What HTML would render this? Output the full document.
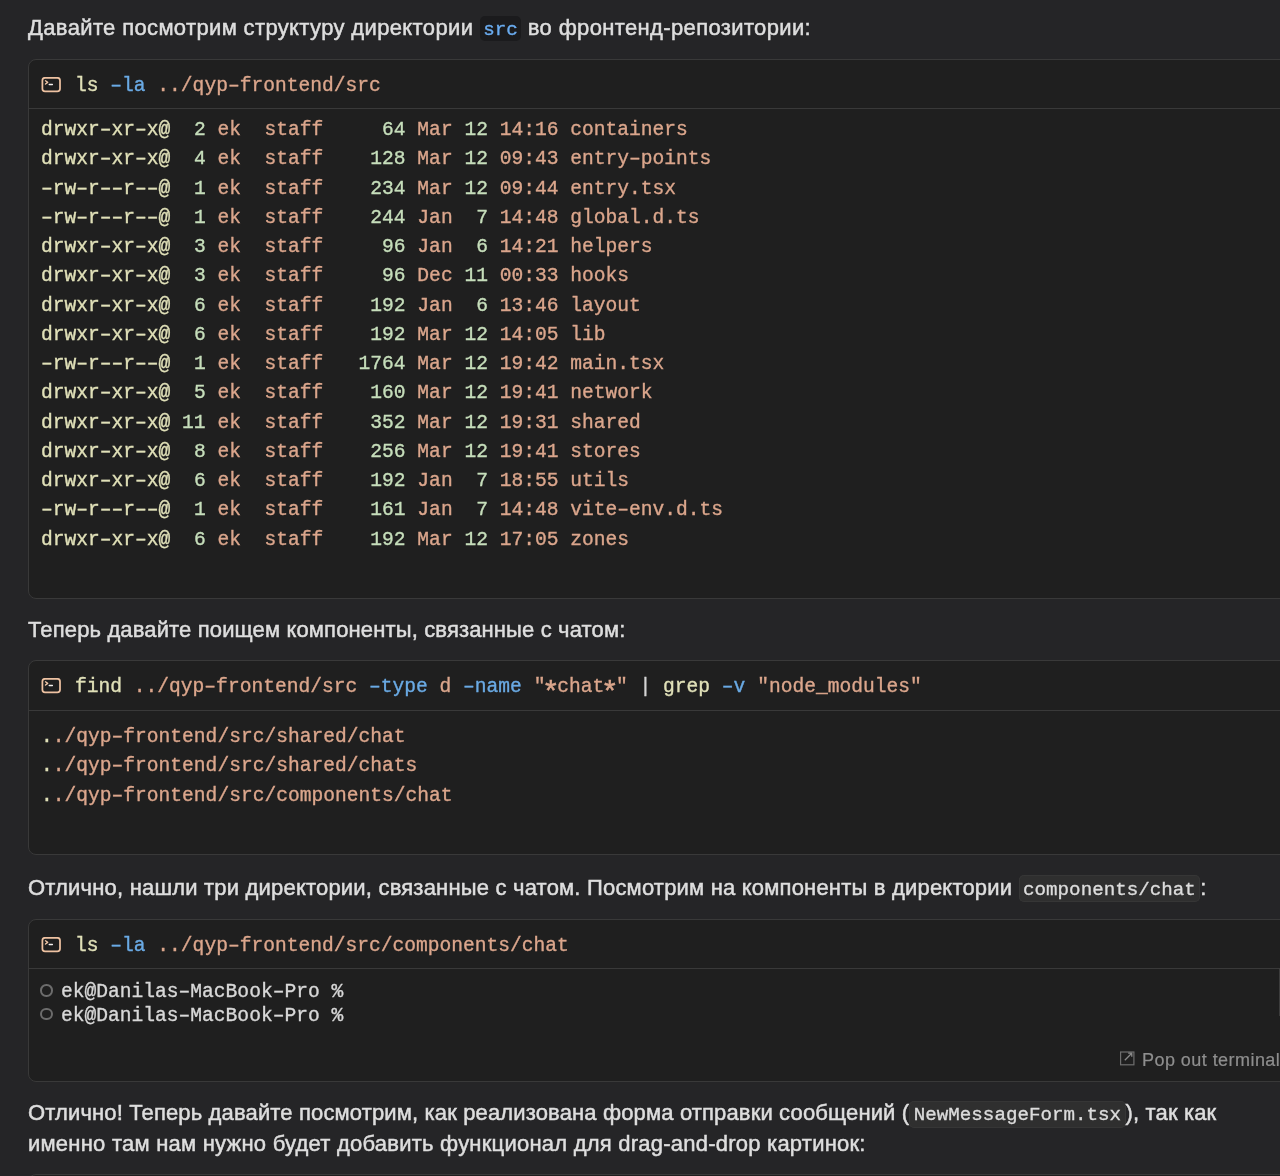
<!DOCTYPE html>
<html><head><meta charset="utf-8">
<style>
html,body{margin:0;padding:0;}
body{width:1280px;height:1176px;background:#252527;position:relative;overflow:hidden;font-family:"Liberation Sans",sans-serif;color:#dedede;}
.p{position:absolute;left:28px;font-size:22px;white-space:nowrap;line-height:30px;letter-spacing:0.2px;-webkit-text-stroke:0.5px #dedede;}
.ic{display:inline-block;font-family:"Liberation Mono",monospace;font-size:19.2px;letter-spacing:0;border-radius:5px;padding:2px 4.5px 0 4.5px;height:26px;line-height:26px;box-sizing:border-box;vertical-align:top;margin-top:1px;-webkit-text-stroke:0.35px currentColor;}
.blk{position:absolute;left:28px;width:1290px;background:#1f1f1f;border:1px solid #393939;border-radius:8px;box-sizing:border-box;}
.hd{position:absolute;left:0;top:0;right:0;height:50px;border-bottom:1px solid #393939;box-sizing:border-box;}
.mono{font-family:"Liberation Mono",monospace;font-size:19.6px;white-space:pre;position:absolute;-webkit-text-stroke:0.35px currentColor;}
.cmd{left:46px;top:13px;line-height:26px;}
.out{left:12px;line-height:29.26px;}
.ti{position:absolute;left:12px;top:17px;width:20px;height:16px;}
.y{color:#e0e0b8}.b{color:#6aaae4}.o{color:#dba68c}.g{color:#c6debb}.w{color:#d4d4d4}
.ast{display:inline-block;transform:translateY(7px) scale(1.5);}
.term{left:32px;line-height:23.6px;color:#d8d8d8;}
.circ{position:absolute;left:11px;width:12.5px;height:12.5px;border:2px solid #6c6c6c;border-radius:50%;box-sizing:border-box;}
.pop{position:absolute;left:1113px;top:1050px;font-size:18px;letter-spacing:0.45px;color:#8e8e8e;white-space:nowrap;-webkit-text-stroke:0.2px #8e8e8e;}
</style></head><body><div id="wrap" style="position:absolute;left:0;top:0;width:1280px;height:1176px;will-change:transform;overflow:hidden">
<div class="p" style="top:13px;letter-spacing:0.36px">Давайте посмотрим структуру директории <span class="ic" style="color:#6aacf0;background:#1b1b1d;margin-top:2.5px;height:25px;padding-top:1px;padding-left:3.5px;padding-right:3.5px">src</span> во фронтенд-репозитории:</div>

<div class="blk" style="top:59px;height:540px">
 <div class="hd" style="height:49px"><svg class="ti" viewBox="0 0 20 16"><rect x="1.4" y="0.85" width="17.6" height="13.6" rx="2.6" fill="none" stroke="#eec2a2" stroke-width="1.75"/><path d="M4.5 3.8 L6.7 5.4 L4.5 7.0" fill="none" stroke="#f2c8a8" stroke-width="1.35" stroke-linecap="round" stroke-linejoin="round"/><path d="M8.2 7.5 H11.4" stroke="#f4f0ee" stroke-width="1.3" stroke-linecap="round"/></svg>
  <div class="mono cmd"><span class="y">ls</span> <span class="b">–la</span> <span class="o">../qyp–frontend/src</span></div>
 </div>
 <div class="mono out" style="top:56px"><span class="y">drwxr–xr–x@</span>  <span class="g">2</span> <span class="o">ek</span>  <span class="o">staff</span>     <span class="g">64</span> <span class="o">Mar</span> <span class="g">12</span> <span class="o">14:16</span> <span class="o">containers</span>
<span class="y">drwxr–xr–x@</span>  <span class="g">4</span> <span class="o">ek</span>  <span class="o">staff</span>    <span class="g">128</span> <span class="o">Mar</span> <span class="g">12</span> <span class="o">09:43</span> <span class="o">entry–points</span>
<span class="y">–rw–r––r––@</span>  <span class="g">1</span> <span class="o">ek</span>  <span class="o">staff</span>    <span class="g">234</span> <span class="o">Mar</span> <span class="g">12</span> <span class="o">09:44</span> <span class="o">entry.tsx</span>
<span class="y">–rw–r––r––@</span>  <span class="g">1</span> <span class="o">ek</span>  <span class="o">staff</span>    <span class="g">244</span> <span class="o">Jan</span>  <span class="g">7</span> <span class="o">14:48</span> <span class="o">global.d.ts</span>
<span class="y">drwxr–xr–x@</span>  <span class="g">3</span> <span class="o">ek</span>  <span class="o">staff</span>     <span class="g">96</span> <span class="o">Jan</span>  <span class="g">6</span> <span class="o">14:21</span> <span class="o">helpers</span>
<span class="y">drwxr–xr–x@</span>  <span class="g">3</span> <span class="o">ek</span>  <span class="o">staff</span>     <span class="g">96</span> <span class="o">Dec</span> <span class="g">11</span> <span class="o">00:33</span> <span class="o">hooks</span>
<span class="y">drwxr–xr–x@</span>  <span class="g">6</span> <span class="o">ek</span>  <span class="o">staff</span>    <span class="g">192</span> <span class="o">Jan</span>  <span class="g">6</span> <span class="o">13:46</span> <span class="o">layout</span>
<span class="y">drwxr–xr–x@</span>  <span class="g">6</span> <span class="o">ek</span>  <span class="o">staff</span>    <span class="g">192</span> <span class="o">Mar</span> <span class="g">12</span> <span class="o">14:05</span> <span class="o">lib</span>
<span class="y">–rw–r––r––@</span>  <span class="g">1</span> <span class="o">ek</span>  <span class="o">staff</span>   <span class="g">1764</span> <span class="o">Mar</span> <span class="g">12</span> <span class="o">19:42</span> <span class="o">main.tsx</span>
<span class="y">drwxr–xr–x@</span>  <span class="g">5</span> <span class="o">ek</span>  <span class="o">staff</span>    <span class="g">160</span> <span class="o">Mar</span> <span class="g">12</span> <span class="o">19:41</span> <span class="o">network</span>
<span class="y">drwxr–xr–x@</span> <span class="g">11</span> <span class="o">ek</span>  <span class="o">staff</span>    <span class="g">352</span> <span class="o">Mar</span> <span class="g">12</span> <span class="o">19:31</span> <span class="o">shared</span>
<span class="y">drwxr–xr–x@</span>  <span class="g">8</span> <span class="o">ek</span>  <span class="o">staff</span>    <span class="g">256</span> <span class="o">Mar</span> <span class="g">12</span> <span class="o">19:41</span> <span class="o">stores</span>
<span class="y">drwxr–xr–x@</span>  <span class="g">6</span> <span class="o">ek</span>  <span class="o">staff</span>    <span class="g">192</span> <span class="o">Jan</span>  <span class="g">7</span> <span class="o">18:55</span> <span class="o">utils</span>
<span class="y">–rw–r––r––@</span>  <span class="g">1</span> <span class="o">ek</span>  <span class="o">staff</span>    <span class="g">161</span> <span class="o">Jan</span>  <span class="g">7</span> <span class="o">14:48</span> <span class="o">vite–env.d.ts</span>
<span class="y">drwxr–xr–x@</span>  <span class="g">6</span> <span class="o">ek</span>  <span class="o">staff</span>    <span class="g">192</span> <span class="o">Mar</span> <span class="g">12</span> <span class="o">17:05</span> <span class="o">zones</span></div>
</div>

<div class="p" style="top:615px;letter-spacing:0.14px">Теперь давайте поищем компоненты, связанные с чатом:</div>

<div class="blk" style="top:660px;height:195px">
 <div class="hd"><svg class="ti" viewBox="0 0 20 16"><rect x="1.4" y="0.85" width="17.6" height="13.6" rx="2.6" fill="none" stroke="#eec2a2" stroke-width="1.75"/><path d="M4.5 3.8 L6.7 5.4 L4.5 7.0" fill="none" stroke="#f2c8a8" stroke-width="1.35" stroke-linecap="round" stroke-linejoin="round"/><path d="M8.2 7.5 H11.4" stroke="#f4f0ee" stroke-width="1.3" stroke-linecap="round"/></svg>
  <div class="mono cmd"><span class="y">find</span> <span class="o">../qyp–frontend/src</span> <span class="b">–type</span> <span class="o">d</span> <span class="b">–name</span> <span class="o">"<span class="ast">*</span>chat<span class="ast">*</span>"</span> <span class="w">|</span> <span class="y">grep</span> <span class="b">–v</span> <span class="o">"node_modules"</span></div>
 </div>
 <div class="mono out" style="top:62px"><span class="y">.</span><span class="o">./qyp–frontend/src/shared/chat</span>
<span class="y">.</span><span class="o">./qyp–frontend/src/shared/chats</span>
<span class="y">.</span><span class="o">./qyp–frontend/src/components/chat</span></div>
</div>

<div class="p" style="top:873px;letter-spacing:0.193px">Отлично, нашли три директории, связанные с чатом. Посмотрим на компоненты в директории <span class="ic" style="color:#dcdcdc;background:#2f2f2f;box-shadow:inset 0 0 0 1px #363636;margin-top:1.5px;height:27px;padding-top:2.5px">components/chat</span>:</div>

<div class="blk" style="top:919px;height:163px">
 <div class="hd" style="height:49px"><svg class="ti" viewBox="0 0 20 16"><rect x="1.4" y="0.85" width="17.6" height="13.6" rx="2.6" fill="none" stroke="#eec2a2" stroke-width="1.75"/><path d="M4.5 3.8 L6.7 5.4 L4.5 7.0" fill="none" stroke="#f2c8a8" stroke-width="1.35" stroke-linecap="round" stroke-linejoin="round"/><path d="M8.2 7.5 H11.4" stroke="#f4f0ee" stroke-width="1.3" stroke-linecap="round"/></svg>
  <div class="mono cmd"><span class="y">ls</span> <span class="b">–la</span> <span class="o">../qyp–frontend/src/components/chat</span></div>
 </div>
 <div class="circ" style="top:64px"></div>
 <div class="circ" style="top:87.6px"></div>
 <div class="mono term" style="top:61px">ek@Danilas–MacBook–Pro %
ek@Danilas–MacBook–Pro %</div>
</div>
<div style="position:absolute;left:1279px;top:968px;width:1px;height:48px;background:#3c3c3c"></div>
<div class="pop"><svg width="16" height="16" viewBox="0 0 16 16" style="position:absolute;left:6px;top:1px"><rect x="1.6" y="1" width="13.3" height="12.8" fill="none" stroke="#6e6e6e" stroke-width="1.2"/><path d="M5.8 9.2 L13 2 M9.2 2.2 H12.8 V5.8" fill="none" stroke="#8a8a8a" stroke-width="1.3"/></svg><span style="position:absolute;left:29px;top:0">Pop out terminal</span></div>

<div class="p" style="top:1098px;letter-spacing:0.144px">Отлично! Теперь давайте посмотрим, как реализована форма отправки сообщений (<span class="ic" style="color:#dcdcdc;background:#2f2f2f;box-shadow:inset 0 0 0 1px #363636;margin-top:3px;height:26.5px;padding-top:1px">NewMessageForm.tsx</span>), так как</div>
<div class="p" style="top:1129px;letter-spacing:0.23px">именно там нам нужно будет добавить функционал для drag-and-drop картинок:</div>
<div class="blk" style="top:1174px;height:50px"></div>
</div></body></html>
